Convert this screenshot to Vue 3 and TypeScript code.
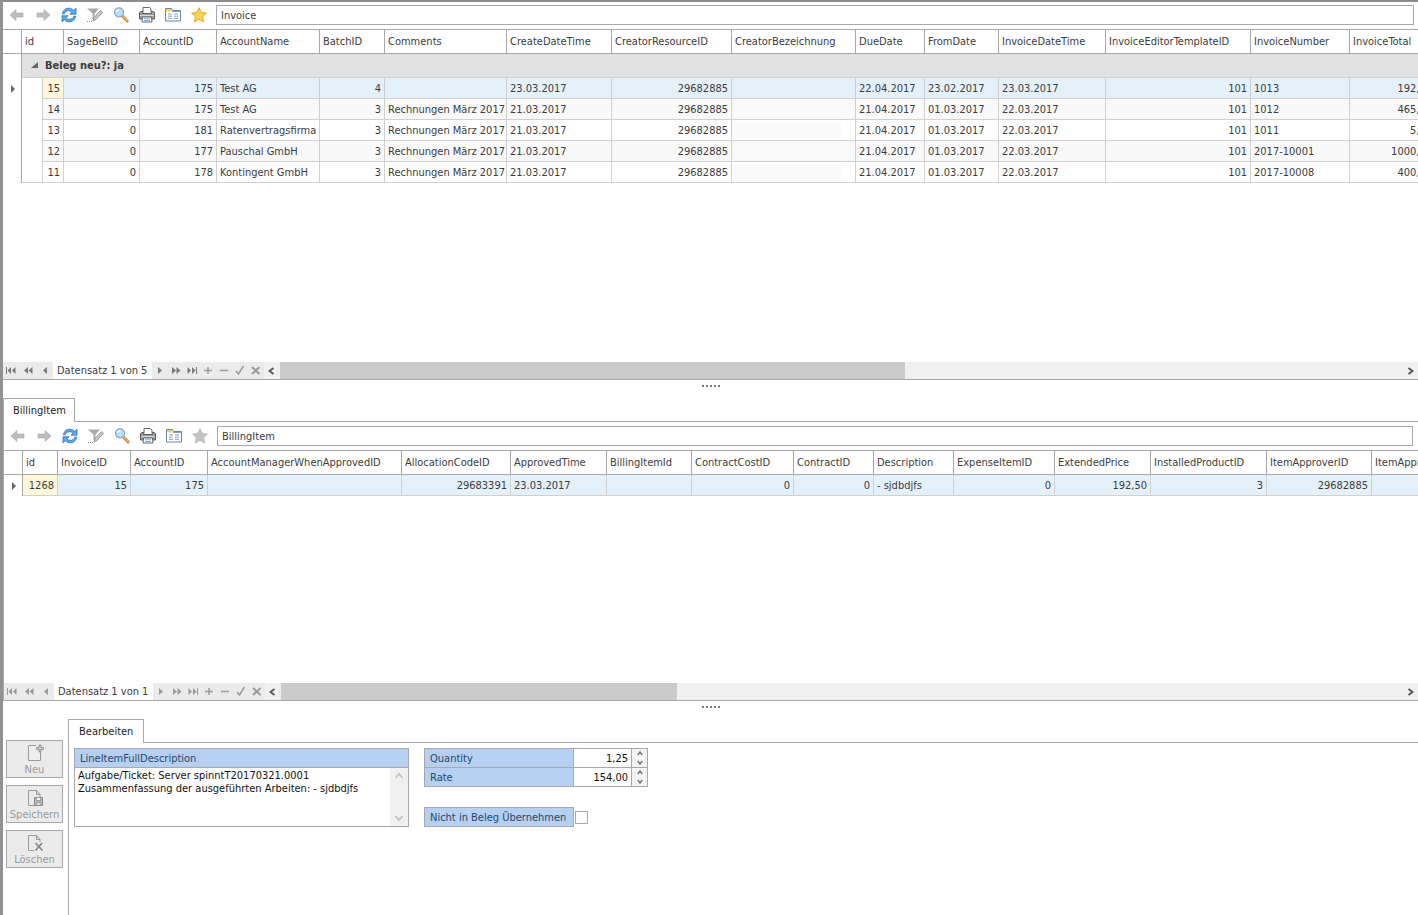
<script setup lang="ts">
import { ref } from 'vue'

interface Column {
  name: string
  width: number
  right?: boolean
}

const invoiceColumns: Column[] = [
  { name: 'SageBelID', width: 76, right: true },
  { name: 'AccountID', width: 77, right: true },
  { name: 'AccountName', width: 103 },
  { name: 'BatchID', width: 65, right: true },
  { name: 'Comments', width: 122 },
  { name: 'CreateDateTime', width: 105 },
  { name: 'CreatorResourceID', width: 120, right: true },
  { name: 'CreatorBezeichnung', width: 124 },
  { name: 'DueDate', width: 69 },
  { name: 'FromDate', width: 74 },
  { name: 'InvoiceDateTime', width: 107 },
  { name: 'InvoiceEditorTemplateID', width: 145, right: true },
  { name: 'InvoiceNumber', width: 99 },
  { name: 'InvoiceTotal', width: 86, right: true },
]

const march = 'Rechnungen März 2017'
const invoices: string[][] = [
  ['15', '0', '175', 'Test AG', '4', '', '23.03.2017', '29682885', '', '22.04.2017', '23.02.2017', '23.03.2017', '101', '1013', '192,50'],
  ['14', '0', '175', 'Test AG', '3', march, '21.03.2017', '29682885', '', '21.04.2017', '01.03.2017', '22.03.2017', '101', '1012', '465,00'],
  ['13', '0', '181', 'Ratenvertragsfirma', '3', march, '21.03.2017', '29682885', '', '21.04.2017', '01.03.2017', '22.03.2017', '101', '1011', '5,00'],
  ['12', '0', '177', 'Pauschal GmbH', '3', march, '21.03.2017', '29682885', '', '21.04.2017', '01.03.2017', '22.03.2017', '101', '2017-10001', '1000,00'],
  ['11', '0', '178', 'Kontingent GmbH', '3', march, '21.03.2017', '29682885', '', '21.04.2017', '01.03.2017', '22.03.2017', '101', '2017-10008', '400,00'],
]

const itemColumns: Column[] = [
  { name: 'id', width: 35, right: true },
  { name: 'InvoiceID', width: 73, right: true },
  { name: 'AccountID', width: 77, right: true },
  { name: 'AccountManagerWhenApprovedID', width: 194 },
  { name: 'AllocationCodeID', width: 109, right: true },
  { name: 'ApprovedTime', width: 96 },
  { name: 'BillingItemId', width: 85 },
  { name: 'ContractCostID', width: 102, right: true },
  { name: 'ContractID', width: 80, right: true },
  { name: 'Description', width: 80 },
  { name: 'ExpenseItemID', width: 101, right: true },
  { name: 'ExtendedPrice', width: 96, right: true },
  { name: 'InstalledProductID', width: 116, right: true },
  { name: 'ItemApproverID', width: 105, right: true },
  { name: 'ItemApproverName', width: 120 },
]
const item = ['1268', '15', '175', '', '29683391', '23.03.2017', '', '0', '0', '- sjdbdjfs', '0', '192,50', '3', '29682885', '']

const total = (cols: Column[], extra: number) => cols.reduce((sum, c) => sum + c.width, extra)

const tools = ['Zurück', 'Vor', 'Aktualisieren', 'Filter bearbeiten', 'Suchen', 'Drucken', 'Karteiansicht', 'Favorit']

const before = [
  { label: 'Erster', d: 'M1 2h1v7H1zM6 2v7L2.500 5.500zM10.500 2v7L7 5.500z' },
  { label: 'Seite zurück', d: 'M6 2v7L2 5.500zM10.500 2v7L6.500 5.500z' },
  { label: 'Voriger', d: 'M8 2v7L4 5.500z' },
]
const after = [
  { label: 'Nächster', d: 'M4 2v7l4-3.500z', line: false },
  { label: 'Seite vor', d: 'M2 2v7l4-3.500zM6.500 2v7l4-3.500z', line: false },
  { label: 'Letzter', d: 'M1.500 2v7L5 5.500zM6 2v7l3.500-3.500zM10 2h1v7h-1z', line: false },
  { label: 'Hinzufügen', d: 'M2 5.500h8M6 2v7', line: true },
  { label: 'Entfernen', d: 'M2 5.500h8', line: true },
  { label: 'Übernehmen', d: 'M2 6l2.500 3L9.500 1', line: true },
  { label: 'Abbrechen', d: 'M2 2l7.500 7M9.500 2L2 9', line: true },
]

const panels = [
  { key: 'invoice', title: 'Invoice', record: 'Datensatz 1 von 5', thumb: 55.6 },
  { key: 'item', title: 'BillingItem', record: 'Datensatz 1 von 1', thumb: 35.3 },
]

const titles = ref(panels.map((p) => p.title))
const description = ref('Aufgabe/Ticket: Server spinntT20170321.0001\nZusammenfassung der ausgeführten Arbeiten: - sjdbdjfs')
const quantity = ref('1,25')
const rate = ref('154,00')
const skip = ref(false)
</script>

<template>
  <main class="app">
    <template v-for="(panel, p) in panels" :key="panel.key">
      <section class="panel" :class="panel.key">
        <div v-if="p === 1" class="tabs"><button class="tab">BillingItem</button></div>
        <div class="body">
          <div class="toolbar">
            <button v-for="(tool, i) in tools" :key="tool" class="tool" :aria-label="tool">
              <svg v-if="i === 0" viewBox="0 0 16 16"><path d="M1 8l6-5.500V6h7v4H7v3.500z" fill="#bdbdbd" stroke="#a9a9a9" stroke-width=".6" /></svg>
              <svg v-else-if="i === 1" viewBox="0 0 16 16"><path d="M15 8L9 2.500V6H2v4h7v3.500z" fill="#bdbdbd" stroke="#a9a9a9" stroke-width=".6" /></svg>
              <svg v-else-if="i === 2" viewBox="0 0 16 16">
                <path d="M1.300 6.800C2 3 5 1 8 1.200c2 .1 3.500.9 4.600 2.100L15 1.200v6H9l1.900-2C9.800 4 8.600 3.500 7.300 3.700 5.300 3.900 3.900 5 3.300 6.800z" fill="#5fa9e6" stroke="#2a72bb" stroke-width=".8" />
                <path d="M14.700 9.200C14 13 11 15 8 14.800c-2-.1-3.500-.9-4.600-2.100L1 14.800v-6h6l-1.900 2c1.100 1.200 2.300 1.700 3.600 1.500 2-.2 3.400-1.300 4-3.100z" fill="#5fa9e6" stroke="#2a72bb" stroke-width=".8" />
              </svg>
              <svg v-else-if="i === 3" viewBox="0 0 16 16">
                <path d="M0 1.500h12L7.500 6.500V12h-2V6.500z" fill="#a8a8a8" />
                <path d="M13.500 3.500l2 1.800-6.500 7.200-3 1.300 1-3.200z" fill="#c9c9c9" stroke="#8f8f8f" stroke-width=".9" />
                <path d="M0 14.500h6" stroke="#888" stroke-dasharray="1 1" />
              </svg>
              <svg v-else-if="i === 4" viewBox="0 0 16 16">
                <path d="M9.500 9l4.500 4.800" stroke="#c97c37" stroke-width="3" stroke-linecap="round" />
                <path d="M9.800 9l4.400 4.500" stroke="#f3b679" stroke-width="1.300" stroke-linecap="round" />
                <circle cx="6" cy="5.300" r="4.500" fill="#b5dff8" stroke="#8aa6c4" stroke-width="1.200" />
                <path d="M3.300 5q.5-2.300 3-2.300" fill="none" stroke="#fff" stroke-width="1.400" />
              </svg>
              <svg v-else-if="i === 5" viewBox="0 0 16 16">
                <path d="M4 5.500V.5h6.500L12 2v3.500" fill="#fff" stroke="#666" />
                <path d="M1.500 4.500h2v2h9v-2h2l1 1v6.500H.5V5.500z" fill="#9f9f9f" stroke="#5b5b5b" />
                <path d="M1 8.500h14" stroke="#d5d5d5" />
                <path d="M3.500 10h9l.5 5H3z" fill="#fff" stroke="#666" />
                <path d="M5 11.800h6M5 13.500h6" stroke="#79afdd" />
              </svg>
              <svg v-else-if="i === 6" viewBox="0 0 16 16">
                <path d="M.5 4V1.500h6l1 2h8v10.500H.5z" fill="#fff" stroke="#6684a8" />
                <path d="M1 2h5l1 2.500H1z" fill="#f3d564" /><path d="M7 4h8v1H7z" fill="#8ba6c3" />
                <path d="M3 7h4M9 7h4M3 9.200h4M9 9.200h4M3 11.400h4M9 11.400h4" stroke="#7c98ba" stroke-width=".9" />
              </svg>
              <svg v-else viewBox="0 0 16 16">
                <path d="M8 .7l2.200 4.800 5.200.6-3.800 3.600 1 5.300L8 12.300 3.400 15l1-5.300L.6 6.100l5.200-.6z" :fill="p ? '#c4c4c4' : '#fcd54b'" :stroke="p ? '#b8b8b8' : '#dd9e2b'" stroke-width=".9" />
              </svg>
            </button>
            <input v-model="titles[p]" class="title" type="text" aria-label="Tabelle" />
          </div>

          <div class="grid">
            <table v-if="p === 0" :style="{ width: total(invoiceColumns, 61) + 'px' }">
              <colgroup>
                <col class="c-mark" /><col class="c-indent" /><col class="c-indent" />
                <col v-for="c in invoiceColumns" :key="c.name" :style="{ width: c.width + 'px' }" />
              </colgroup>
              <thead>
                <tr><th></th><th colspan="2">id</th><th v-for="c in invoiceColumns" :key="c.name">{{ c.name }}</th></tr>
              </thead>
              <tbody>
                <tr class="group">
                  <td class="mark"></td>
                  <td colspan="16"><svg class="fold" viewBox="0 0 7 7"><path d="M7 0v6H0z" fill="#666" /></svg>Beleg neu?: ja</td>
                </tr>
                <tr v-for="(row, r) in invoices" :key="row[0]" :class="{ active: r === 0, odd: r % 2 === 1 }">
                  <td class="mark"><svg v-if="r === 0" viewBox="0 0 5 8"><path d="M0 0v8l4-4z" fill="#666" /></svg></td>
                  <td class="indent" :class="{ last: r === invoices.length - 1 }"></td>
                  <td class="right key">{{ row[0] }}</td>
                  <td v-for="(c, i) in invoiceColumns" :key="c.name" :class="{ right: c.right }">
                    <span v-if="c.name === 'CreatorBezeichnung'" class="masked"></span>
                    <template v-else>{{ row[i + 1] }}</template>
                  </td>
                </tr>
              </tbody>
            </table>
            <table v-else :style="{ width: total(itemColumns, 19) + 'px' }">
              <colgroup>
                <col class="c-mark" />
                <col v-for="c in itemColumns" :key="c.name" :style="{ width: c.width + 'px' }" />
              </colgroup>
              <thead>
                <tr><th></th><th v-for="c in itemColumns" :key="c.name">{{ c.name }}</th></tr>
              </thead>
              <tbody>
                <tr class="active">
                  <td class="mark"><svg viewBox="0 0 5 8"><path d="M0 0v8l4-4z" fill="#666" /></svg></td>
                  <td v-for="(c, i) in itemColumns" :key="c.name" :class="{ right: c.right, key: i === 0 }">{{ item[i] }}</td>
                </tr>
              </tbody>
            </table>
          </div>

          <div class="footer">
            <div class="nav">
              <button v-for="b in before" :key="b.label" :aria-label="b.label"><svg viewBox="0 0 12 11"><path :d="b.d" /></svg></button>
            </div>
            <span class="record">{{ panel.record }}</span>
            <div class="nav after">
              <button v-for="b in after" :key="b.label" :aria-label="b.label"><svg viewBox="0 0 12 11"><path :d="b.d" :class="{ line: b.line, cross: b.label === 'Abbrechen' }" /></svg></button>
            </div>
            <button class="arrow" aria-label="Nach links"><svg viewBox="0 0 8 8"><path d="M6.500 1L2.500 4l4 3" /></svg></button>
            <div class="track"><div class="thumb" :style="{ width: panel.thumb + '%' }"></div></div>
            <button class="arrow" aria-label="Nach rechts"><svg viewBox="0 0 8 8"><path d="M1.500 1l4 3-4 3" /></svg></button>
          </div>
        </div>
      </section>
      <div class="splitter"><i v-for="n in 5" :key="n"></i></div>
    </template>

    <section class="editor">
      <div class="actions">
        <button disabled>
          <svg viewBox="0 0 18 18"><path d="M10 1.500H2.500v15h12V8" fill="#eee" stroke="#999" /><path d="M13 1h2v2.500h2.500v2H15V8h-2V5.500h-2.500v-2H13z" fill="#ccc" stroke="#888" stroke-width=".8" /></svg>
          Neu
        </button>
        <button disabled>
          <svg viewBox="0 0 18 18"><path d="M8 16.500H2.500v-15h8l3.500 4V8M10.500 1.500v4H14" fill="none" stroke="#999" /><path d="M8.500 8.500h8v8h-8z" fill="#bbb" stroke="#888" /><path d="M10.500 8.500h4v3h-4zM11 13.500h3v3h-3z" fill="#f4f4f4" stroke="#888" stroke-width=".7" /></svg>
          Speichern
        </button>
        <button disabled>
          <svg viewBox="0 0 18 18"><path d="M8 16.500H2.500v-15h8l3.500 4V8M10.500 1.500v4H14" fill="none" stroke="#999" /><path d="M9.500 9l7 7.500M16 9l-6.500 7.500" stroke="#888" stroke-width="1.800" /></svg>
          Löschen
        </button>
      </div>
      <div class="edit">
        <div class="tabs"><button class="tab">Bearbeiten</button></div>
        <div class="form">
          <div class="memo">
            <label for="description">LineItemFullDescription</label>
            <div class="memo-body">
              <textarea id="description" v-model="description"></textarea>
              <div class="memo-scroll">
                <svg viewBox="0 0 10 8"><path d="M1.500 6L5 2l3.500 4" /></svg>
                <svg viewBox="0 0 10 8"><path d="M1.500 2L5 6l3.500-4" /></svg>
              </div>
            </div>
          </div>
          <div class="fields">
            <div class="field">
              <label for="quantity">Quantity</label><input id="quantity" v-model="quantity" type="text" />
              <span class="spin"><button aria-label="Menge erhöhen"><svg viewBox="0 0 6 5"><path d="M.8 4L3 1l2.200 3" /></svg></button><button aria-label="Menge verringern"><svg viewBox="0 0 6 5"><path d="M.8 1L3 4l2.200-3" /></svg></button></span>
            </div>
            <div class="field">
              <label for="rate">Rate</label><input id="rate" v-model="rate" type="text" />
              <span class="spin"><button aria-label="Satz erhöhen"><svg viewBox="0 0 6 5"><path d="M.8 4L3 1l2.200 3" /></svg></button><button aria-label="Satz verringern"><svg viewBox="0 0 6 5"><path d="M.8 1L3 4l2.200-3" /></svg></button></span>
            </div>
            <div class="field check">
              <label for="skip">Nicht in Beleg Übernehmen</label><input id="skip" v-model="skip" type="checkbox" />
            </div>
          </div>
        </div>
      </div>
    </section>
  </main>
</template>

<style>
body { margin: 0; background: #fff; }
</style>

<style scoped>
.app {
  box-sizing: border-box;
  min-height: 100vh;
  display: grid;
  grid-template-columns: minmax(0, 1fr);
  grid-template-rows: 378fr 18px 303fr 18px 196fr;
  border-top: 2px solid #8c8c8c;
  border-left: 3px solid #929292;
  overflow: hidden;
  font: 11px/14px Tahoma, "DejaVu Sans Condensed", "DejaVu Sans", sans-serif;
  color: #3c3c3c;
}
button, input, textarea { font: inherit; color: inherit; margin: 0; padding: 0; border: 0; border-radius: 0; background: none; box-sizing: border-box; }
svg { display: block; }

.panel, .body { display: flex; flex-direction: column; min-height: 0; min-width: 0; }
.body { flex: 1; }
.item .body { border-left: 1px solid #a8a8a8; }

.tabs { display: flex; height: 24px; flex: none; }
.tabs::after { content: ""; flex: 1; border-bottom: 1px solid #a8a8a8; }
.tab { padding: 0 10px; border: 1px solid #a8a8a8; border-bottom: 0; color: #1e1e1e; }
.item .tab { padding: 0 8px 0 9px; }

.toolbar { display: flex; align-items: center; height: 27px; flex: none; box-sizing: border-box; padding: 0 4px 1px 6px; }
.item .toolbar { height: 28px; padding: 0 5px 0 6px; }
.tool { width: 16px; height: 16px; margin-right: 10px; }
.tool svg { width: 16px; height: 16px; }
.title { flex: 1; min-width: 0; height: 20px; border: 1px solid #a8a8a8; padding: 0 4px; margin-left: -1px; }

.grid { flex: 1; min-height: 0; overflow: hidden; }
table { table-layout: fixed; border-collapse: separate; border-spacing: 0; }
.c-mark { width: 19px; }
.c-indent { width: 21px; }
th, td { box-sizing: border-box; overflow: hidden; white-space: nowrap; padding: 0 3px; text-align: left; font-weight: 400; }
th { height: 25px; border: 1px solid #a8a8a8; border-left: 0; }
td { height: 21px; padding-top: 1px; border-right: 1px solid #d0d0d0; border-bottom: 1px solid #d0d0d0; }
.right { text-align: right; }
.odd td { background: #f9f9f9; }
.active td { background: #e4f0fa; }
.active .key { background: #fff7d9; }
.group td { height: 24px; background: #e1e1e1; border-right: 0; font-weight: 700; padding-left: 9px; }
tr td.mark { background: #fff; border-bottom: 0; border-right: 1px solid #a8a8a8; padding: 0 0 0 8px; }
tr td.indent { background: #fff; border-bottom: 0; }
tr td.indent.last { border-bottom: 1px solid #d0d0d0; }
.mark svg { width: 5px; height: 8px; }
.fold { display: inline-block; width: 7px; height: 7px; margin-right: 7px; }
.masked { display: block; width: 106px; height: 15px; }
tr:not(.active) .masked { background: #fafafa; }

.footer { display: flex; height: 18px; flex: none; border-bottom: 1px solid #a8a8a8; background: #f0f0f0; box-sizing: border-box; }
.nav { display: flex; width: 50px; background: #ebebeb; justify-content: space-around; align-items: center; }
.after { width: 112px; }
.nav svg { width: 12px; height: 11px; }
.nav path { fill: #7a7a7a; }
.item .nav path { fill: #9a9a9a; }
.nav path.line, .item .nav path.line { fill: none; stroke: #9a9a9a; stroke-width: 1.5; }
.nav path.cross, .item .nav path.cross { stroke-width: 2; }
.record { background: #fff; padding: 2px 4px 0; width: 91px; white-space: nowrap; }
.arrow { width: 14px; display: flex; align-items: center; justify-content: center; }
.arrow svg { width: 8px; height: 8px; }
.arrow path { fill: none; stroke: #555; stroke-width: 1.8; }
.track { flex: 1; margin-left: 2px; }
.thumb { height: 100%; background: #cbcbcb; }
.splitter { display: flex; gap: 2px; justify-content: center; padding-top: 5px; }
.splitter i { width: 2px; height: 2px; background: #777; }

.editor { display: flex; min-width: 0; }
.actions { display: flex; flex-direction: column; gap: 7px; padding: 21px 5px 0 3px; }
.actions button { width: 57px; height: 38px; border: 1px solid #a8a8a8; background: #ebebeb; color: #999; display: flex; flex-direction: column; align-items: center; justify-content: flex-end; line-height: 15px; white-space: nowrap; }
.actions svg { width: 18px; height: 18px; }
.edit { flex: 1; min-width: 0; display: flex; flex-direction: column; }
.form { flex: 1; display: flex; align-items: flex-start; gap: 15px; border-left: 1px solid #a8a8a8; padding: 5px; }
.memo { width: 335px; border: 1px solid #a8a8a8; box-sizing: border-box; }
.memo label { display: block; height: 19px; line-height: 19px; box-sizing: border-box; padding-left: 5px; border-bottom: 1px solid #a8a8a8; background: #b7cff1; color: #1f4a6b; }
.memo-body { display: flex; height: 58px; color: #111; }
textarea { flex: 1; min-width: 0; resize: none; overflow: hidden; padding: 1px 3px; line-height: 13px; outline: 0; white-space: pre; }
.memo-scroll { width: 18px; background: #f0f0f0; display: flex; flex-direction: column; justify-content: space-between; align-items: center; padding: 4px 0; box-sizing: border-box; }
.memo-scroll svg { width: 10px; height: 8px; }
.memo-scroll path, .spin path { fill: none; stroke: #c0c0c0; stroke-width: 1.6; }
.fields { border-top: 1px solid #a8a8a8; }
.field { display: flex; height: 19px; width: 224px; box-sizing: border-box; border: 1px solid #a8a8a8; border-top: 0; }
.field label { width: 149px; box-sizing: border-box; padding: 1px 0 0 5px; line-height: 17px; background: #b7cff1; color: #1f4a6b; border-right: 1px solid #a8a8a8; white-space: nowrap; }
.field input { flex: 1; min-width: 0; text-align: right; padding: 1px 3px 0; color: #111; }
.spin { width: 16px; border-left: 1px solid #a8a8a8; background: #f3f3f3; display: flex; flex-direction: column; box-sizing: border-box; }
.spin button { flex: 1; display: flex; align-items: center; justify-content: center; }
.spin svg { width: 6px; height: 5px; }
.spin path { stroke: #777; stroke-width: 1.5; }
.check { border: 0; margin-top: 20px; height: 20px; align-items: center; }
.check label { width: 150px; height: 20px; border: 1px solid #a8a8a8; }
.field.check input { appearance: none; flex: none; width: 13px; height: 13px; padding: 0; margin-left: 1px; border: 1px solid #a8a8a8; background: #fff; }
</style>
